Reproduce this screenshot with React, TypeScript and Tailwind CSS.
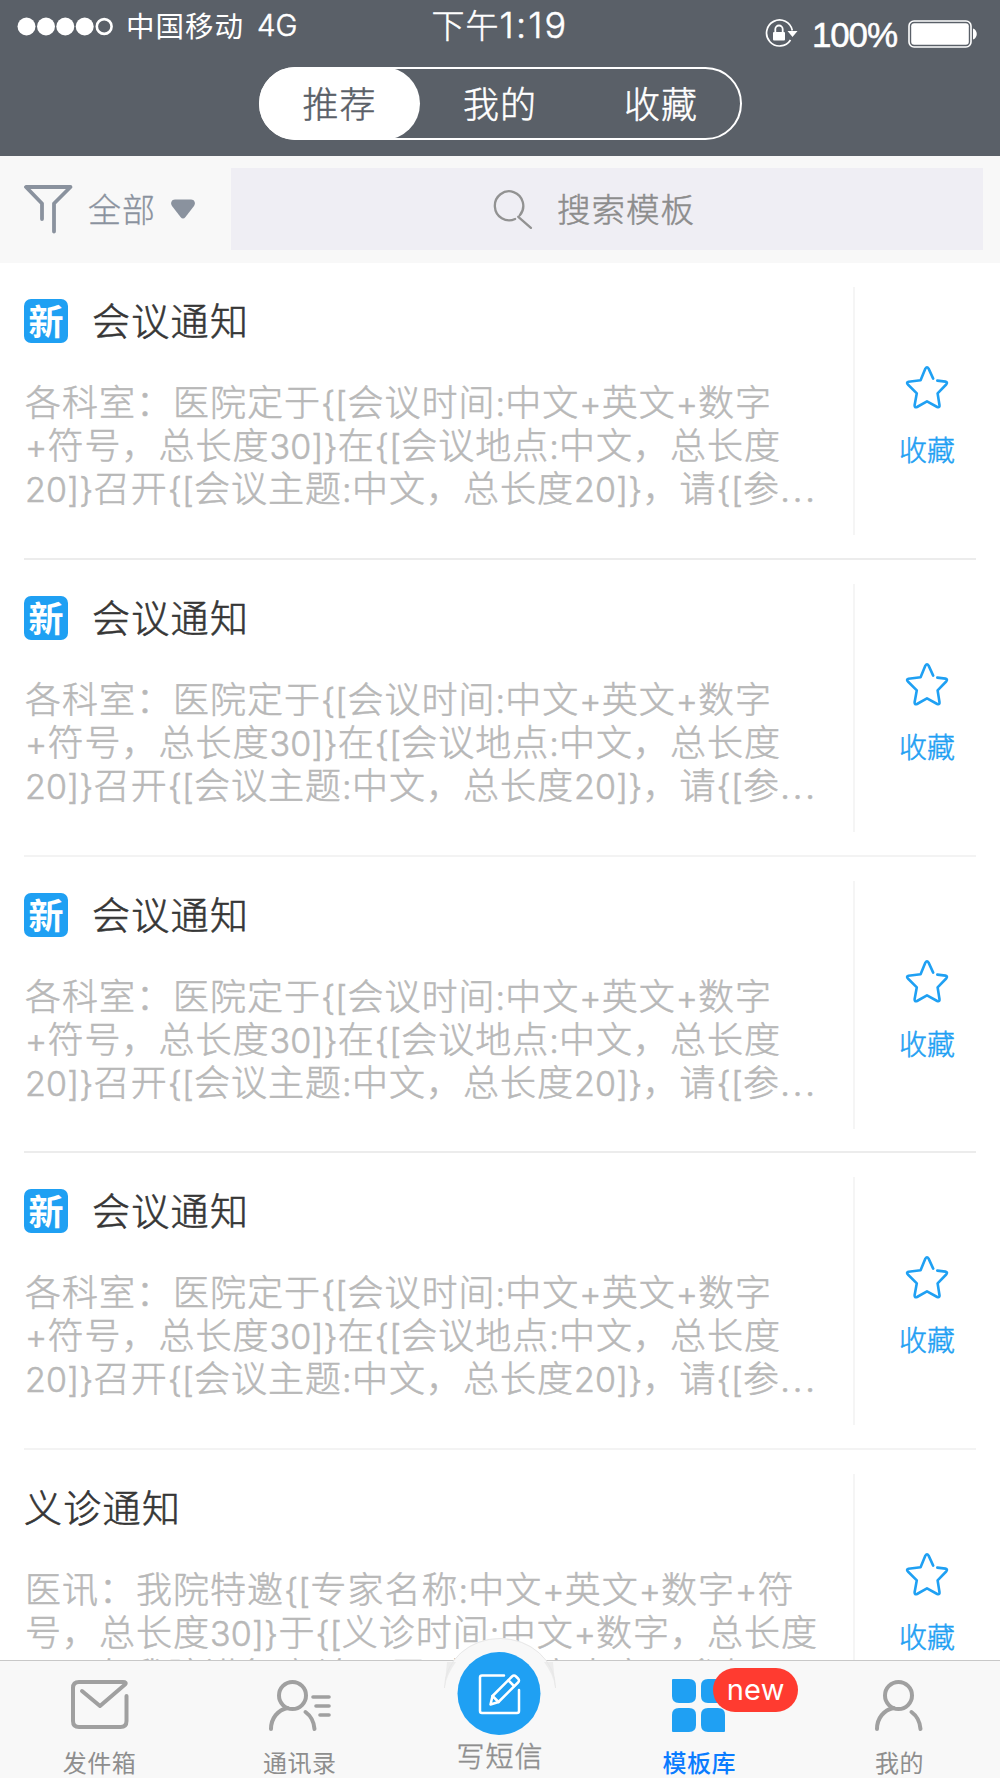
import React from 'react';
import clsx from 'clsx';

interface Template {
  id: number;
  title: string;
  isNew: boolean;
  lines: string[];
  truncated?: boolean;
}

const MEETING_LINES = [
  '各科室：医院定于{[会议时间:中文+英文+数字',
  '+符号，总长度30]}在{[会议地点:中文，总长度',
  '20]}召开{[会议主题:中文，总长度20]}，请{[参',
];

const CLINIC_LINES = [
  '医讯：我院特邀{[专家名称:中文+英文+数字+符',
  '号，总长度30]}于{[义诊时间:中文+数字，总长度',
  '20]}在我院进行义诊，届时欢迎广大市民参加',
];

const TEMPLATES: Template[] = [
  { id: 1, title: '会议通知', isNew: true, lines: MEETING_LINES, truncated: true },
  { id: 2, title: '会议通知', isNew: true, lines: MEETING_LINES, truncated: true },
  { id: 3, title: '会议通知', isNew: true, lines: MEETING_LINES, truncated: true },
  { id: 4, title: '会议通知', isNew: true, lines: MEETING_LINES, truncated: true },
  { id: 5, title: '义诊通知', isNew: false, lines: CLINIC_LINES },
];

function StatusBar() {
  return (
    <div className="grid grid-cols-[1fr_auto_1fr] h-[60px] text-white">
      <div className="flex items-start pl-[17px]">
        <svg width="98" height="20" viewBox="0 0 98 20" className="mt-[17px]" fill="#fff">
          <circle cx="9.5" cy="9.5" r="9" />
          <circle cx="29" cy="9.5" r="9" />
          <circle cx="48.3" cy="9.5" r="9" />
          <circle cx="67.7" cy="9.5" r="9" />
          <circle cx="87.2" cy="9.5" r="7.4" fill="none" stroke="#fff" strokeWidth="2.6" />
        </svg>
        <span className="ml-[11px] mt-[4px] text-[28.5px] leading-[42px] tracking-[1px]">中国移动</span>
        <span className="ml-[13px] mt-[4px] font-['Inter'] text-[29.5px] leading-[42px] font-light [-webkit-text-stroke:0.5px]">4G</span>
      </div>
      <span className="mt-[2px] text-[33px] leading-[44px] font-light tracking-[1px] [-webkit-text-stroke:0.5px]">
        下午<span className="font-['Inter'] text-[36px] tracking-[2.200px]">1:19</span>
      </span>
      <div className="flex items-start justify-end pr-[22px]">
        <svg width="33" height="30" viewBox="0 0 33 30" className="mt-[18px] mr-[14px]">
          <path d="M27.3 12.5A13 13 0 1 0 25.5 22" fill="none" stroke="#fff" strokeWidth="1.7" />
          <path d="M22.5 13h10l-5 6z" fill="#fff" />
          <rect x="8" y="14" width="12" height="8.5" rx="1" fill="#fff" />
          <path d="M10.3 14v-2.8a3.7 3.7 0 0 1 7.4 0V14" fill="none" stroke="#fff" strokeWidth="1.8" />
        </svg>
        <span className="mt-[14px] mr-[11px] font-['Liberation_Sans'] text-[35px] leading-[42px] tracking-[-1.1px] [-webkit-text-stroke:0.5px]">100%</span>
        <svg width="70" height="28" viewBox="0 0 70 28" className="mt-[20px]">
          <rect x="1" y="1" width="62" height="26" rx="5" fill="none" stroke="#fff" strokeWidth="1.6" />
          <rect x="3.2" y="3.2" width="57.6" height="21.6" rx="3" fill="#fff" />
          <path d="M65 8.5c5 1.5 5 9.500 0 11z" fill="#fff" />
        </svg>
      </div>
    </div>
  );
}

function SegmentedTabs() {
  return (
    <div className="mx-auto mt-[7px] flex h-[73px] w-[483px] rounded-full border-[2.5px] border-white text-[36px] leading-[64px] font-light tracking-[1px] [-webkit-text-stroke:0.5px]">
      <button className="-mt-[2px] -mb-[2px] -ml-[2px] w-[161px] rounded-full bg-white pb-[4px] pl-[1px] text-[#5a6068]">推荐</button>
      <button className="w-[160px] pb-[4px] pl-[1px] text-white">我的</button>
      <button className="w-[160px] pb-[4px] pl-[3px] text-white">收藏</button>
    </div>
  );
}

function FilterBar() {
  return (
    <div className="flex h-[107px] shrink-0 items-start bg-[#f8f8f8] pl-[24px] pr-[17px]">
      <svg width="49" height="50" viewBox="0 0 49 50" className="mt-[28px]" fill="none" stroke="#8a929e" strokeWidth="3.8" strokeLinecap="round" strokeLinejoin="round">
        <path d="M18 35V19.500L2 3h44.500L30 19.500V47.500" />
      </svg>
      <span className="ml-[15px] mt-[28px] text-[33px] leading-[48px] tracking-[1px] font-light text-[#8a929e] [-webkit-text-stroke:0.3px]">全部</span>
      <svg width="26" height="22" viewBox="0 0 26 22" className="ml-[14px] mt-[42px]" fill="#8a929e">
        <path d="M5 1.500h16c3.500 0 5 3.500 3 6.500L15.500 19q-2.500 3-5 0L2 8C0 5 1.500 1.500 5 1.500z" />
      </svg>
      <div className="ml-auto mt-[12px] flex h-[82px] w-[752px] items-start bg-[#efeef4]">
        <svg width="40" height="40" viewBox="0 0 38 38" className="ml-[262px] mt-[22px]" fill="none" stroke="#929292" strokeWidth="2.200" strokeLinecap="round">
          <path d="M25.500 24A13.500 13.800 0 1 0 21 27.500M24 25.500L36 36" />
        </svg>
        <span className="ml-[24px] mt-[16px] text-[33.500px] leading-[48px] tracking-[1px] font-light text-[#8c8c8c] [-webkit-text-stroke:0.5px]">搜索模板</span>
      </div>
    </div>
  );
}

function StarIcon() {
  return (
    <svg width="44" height="44" viewBox="0 0 44 44" fill="none" stroke="#1fa0f3" strokeWidth="2.600" strokeLinecap="round" strokeLinejoin="round">
      <path d="M28.200 13.600L23.600 3.600Q22 .8 20.400 3.600L15.600 15.300L3.500 16.700Q1 17.400 2.900 19.500L11.800 28.300L9.600 40.300Q9.600 43 12 42L22 36.400L32.200 42Q34.800 43 34.500 40.300L32.600 28.300L41.200 19.500Q43 17.200 40.500 16.600L32.300 15.600" />
    </svg>
  );
}

// Latin runs are set a little smaller than the Chinese around them
function MixedText({ text }: { text: string }) {
  return (
    <>
      {text.split(/([\x21-\x7e]+)/).map((part, i) =>
        i % 2 === 1 ? (
          <span key={i} className="font-['Inter'] text-[34px] tracking-[.2px]">{part}</span>
        ) : (
          part
        )
      )}
    </>
  );
}

function TemplateRow({ template }: { template: Template }) {
  return (
    <div className="h-[296.750px] shrink-0 px-[24px]">
      <div className={clsx('flex h-full border-b-2', template.id % 2 === 1 ? 'border-[#ececec]' : 'border-[#f3f3f3]')}>
        <div className="w-[829px] shrink-0 pt-[34px]">
          <div className="flex h-[48px] items-start">
            {template.isNew && (
              <span className="mt-[2px] mr-[24px] flex h-[44px] w-[44px] justify-center rounded-[7px] bg-[#1fa0f3] text-[35px] leading-[41px] font-bold text-white">
                新
              </span>
            )}
            <span className="-mt-[2px] text-[38px] leading-[48px] font-light tracking-[1.300px] text-[#363636] [-webkit-text-stroke:0.6px]">{template.title}</span>
          </div>
          <div className="mt-[34px] pl-[1px] text-[36px] leading-[43px] tracking-[1px] font-light whitespace-nowrap text-[#b8b8b8] [-webkit-text-stroke:0.5px]">
            {template.lines.map((line, i) => (
              <div key={line} className="h-[43px]">
                <MixedText text={line} />
                {template.truncated && i === template.lines.length - 1 && <span className="font-['Inter'] tracking-[2.400px]">...</span>}
              </div>
            ))}
          </div>
        </div>
        <div className="mt-[24px] h-[248px] w-[2px] bg-[#f5f5f5]" />
        <button className="flex flex-1 flex-col items-center pt-[102px] pl-[23px] text-[#1fa0f3]">
          <StarIcon />
          <span className="mt-[20px] text-[28px] leading-[40px] font-light [-webkit-text-stroke:0.5px]">收藏</span>
        </button>
      </div>
    </div>
  );
}

function MailIcon() {
  return (
    <svg width="60" height="54" viewBox="0 0 60 54" fill="none" stroke="#a0a0a0" strokeWidth="4" strokeLinecap="round" strokeLinejoin="round">
      <path d="M56.500 17V42q0 6-6 6H9q-6 0-6-6V9q0-6 6-6H53q4 0 2 2.500L30 27L12 12" />
    </svg>
  );
}

function PersonIcon({ withLines }: { withLines?: boolean }) {
  return (
    <svg width={withLines ? 64 : 50} height="54" viewBox={withLines ? '0 0 64 54' : '0 0 50 54'} fill="none" stroke="#a0a0a0" strokeWidth="4" strokeLinecap="round">
      <circle cx="24.500" cy="16.500" r="13.500" />
      <path d="M3 50C3 39 10 31 19.500 29M37.500 33C43 37 46 43 46.500 50" />
      {withLines && <path d="M45 18h16M48 27h13M52 36h9" strokeWidth="3.600" />}
    </svg>
  );
}

function GridIcon() {
  return (
    <svg width="54" height="54" viewBox="0 0 54 54" fill="#1fa0f3">
      <path d="M1 0h16q7 0 7 7v10q0 7-7 7H7q-7 0-7-7V1q0-1 1-1z" />
      <path d="M36 0h10q7 0 7 7v10q0 7-7 7h-10q-7 0-7-7V7q0-7 7-7z" />
      <path d="M7 29h10q7 0 7 7v10q0 7-7 7H1q-1 0-1-1V36q0-7 7-7z" />
      <path d="M36 29h10q7 0 7 7v16q0 1-1 1H36q-7 0-7-7v-10q0-7 7-7z" />
    </svg>
  );
}

function TabItem({ label, active, children }: { label: string; active?: boolean; children: React.ReactNode }) {
  return (
    <button className="flex flex-1 flex-col items-center pt-[18px] pr-[1px]">
      <div className="relative flex h-[54px] items-start justify-center">{children}</div>
      <span
        className={clsx(
          'mt-[15px] text-[24px] leading-[28px] tracking-[.5px]',
          active ? 'font-medium text-[#0a7cff]' : 'text-[#8e8e8e]'
        )}
      >
        {label}
      </span>
    </button>
  );
}

function TabBar() {
  return (
    <div className="relative flex h-[118px] shrink-0 border-t border-[#c8c8c8] bg-[#f8f8f8]">
      <TabItem label="发件箱"><MailIcon /></TabItem>
      <TabItem label="通讯录"><PersonIcon withLines /></TabItem>
      <div className="flex-1" />
      <TabItem label="模板库" active>
        <GridIcon />
        <span className="absolute -top-[11px] left-[41px] h-[44px] w-[85px] rounded-full bg-[#ff3b30] text-center font-['Inter'] text-[29px] leading-[44px] tracking-[.3px] text-white">
          new
        </span>
      </TabItem>
      <TabItem label="我的"><PersonIcon /></TabItem>

      {/* Raised compose button */}
      <button className="absolute -top-[23px] left-1/2 flex w-[112px] -translate-x-1/2 flex-col items-center">
        <svg width="112" height="98" viewBox="0 0 112 98">
          <path d="M.5 50A55.500 50 0 0 1 111.500 50V98H.5z" fill="#f8f8f8" />
          <path d="M3 24h9Q3 36 .5 50zM109 24h-9Q109 36 111.500 50z" fill="#ececec" />
          <path d="M.5 50A55.500 49.500 0 0 1 111.500 50" fill="none" stroke="#e8e8e8" />
          <circle cx="55" cy="55.500" r="41.500" fill="#1fa0f3" />
          <g fill="none" stroke="#fff" strokeWidth="2.500" strokeLinecap="round" strokeLinejoin="round">
            <path d="M60 37.500H38q-2 0-2 2V73q0 2 2 2H73q2 0 2-2V52" />
            <path d="M46.500 66.500l2-8.500L68 38.500q2-2 4 0l2 2q2 2 0 4L54.500 64z" />
            <path d="M64.500 42.500l5.500 5.500M48.500 58l6 6" />
          </g>
        </svg>
        <span className="-mt-[1px] text-[28px] leading-[40px] font-light tracking-[1px] whitespace-nowrap text-[#8e8e8e] [-webkit-text-stroke:0.5px]">写短信</span>
      </button>
    </div>
  );
}

export default function App() {
  return (
    <div lang="zh-CN" className="flex h-[1778px] w-[1000px] flex-col overflow-hidden bg-white font-['Noto_Sans_CJK_SC',sans-serif]">
      <header className="h-[156px] shrink-0 bg-[#5a6068]">
        <StatusBar />
        <SegmentedTabs />
      </header>
      <FilterBar />
      <main className="min-h-0 flex-1 overflow-hidden">
        {TEMPLATES.map((template) => (
          <TemplateRow key={template.id} template={template} />
        ))}
      </main>
      <TabBar />
    </div>
  );
}
